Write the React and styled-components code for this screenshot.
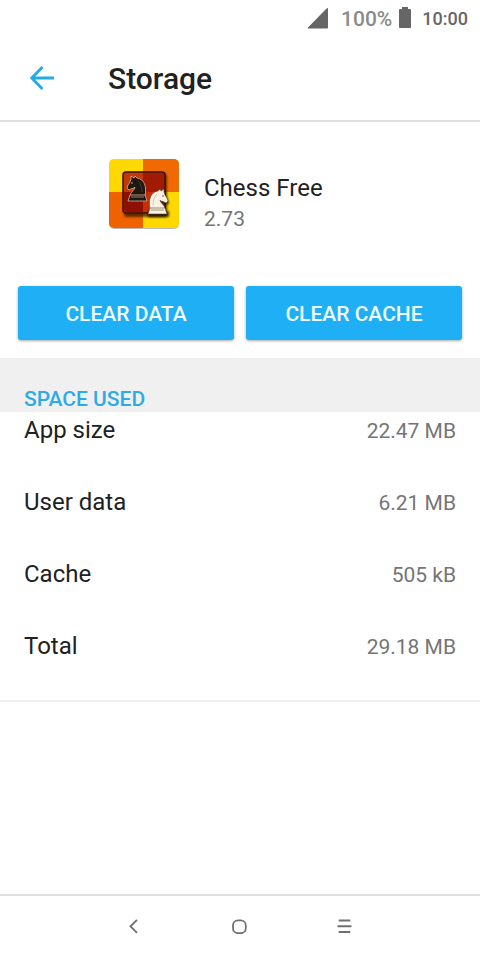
import React from 'react';
import styled, { createGlobalStyle } from 'styled-components';

const spaceUsed = [
  { label: 'App size', value: '22.47 MB' },
  { label: 'User data', value: '6.21 MB' },
  { label: 'Cache', value: '505 kB' },
  { label: 'Total', value: '29.18 MB' },
];

const KNIGHT =
  'M3 20 C3 16 8 14 8 11 C7 13 5 12 4 13 L2 14 L0 12 L1 9 L3 6 L4 3 L4 0 L7 2 L8 0 L10 2 C17 3 20 10 18 20 Z';

const ChessLogo = () => (
  <svg width="72" height="72" viewBox="0 0 72 72" role="img" aria-label="Chess Free">
    <defs>
      <clipPath id="tile">
        <rect x="1" y="1" width="70" height="69" rx="5" />
      </clipPath>
      <filter id="soft" x="-20%" y="-20%" width="150%" height="150%">
        <feGaussianBlur stdDeviation="1.2" />
      </filter>
    </defs>
    <rect x="1" y="2" width="70" height="69" rx="5" fill="#bbb" />
    <g clipPath="url(#tile)">
      <rect width="72" height="72" fill="#ffd800" />
      <rect x="35" width="37" height="34" fill="#f06a02" />
      <rect y="34" width="35" height="38" fill="#ee6200" />
    </g>
    <rect x="16" y="16" width="43" height="43" rx="3" fill="#3a1200" opacity="0.75" filter="url(#soft)" />
    <rect x="15" y="14" width="42" height="41" rx="3" fill="#c4380a" stroke="#351006" strokeWidth="1.5" />
    <path d="M35 15 H55 Q56 15 56 16 V34 H35 Z" fill="#a01a04" />
    <path d="M16 34 H35 V54 H18 Q16 54 16 52 Z" fill="#8e1004" />
    <path d="M35 34 H56 V54 H35 Z" fill="#c33007" />
    <g transform="translate(19 18)">
      <path d={KNIGHT} fill="#201713" stroke="#d9b48c" strokeWidth="0.8" />
      <path d="M3 19 H18 L20 25 H1 Z" fill="#201713" stroke="#d9b48c" strokeWidth="0.8" />
      <path d="M4 21 H17" fill="none" stroke="#b39a80" strokeWidth="0.8" />
      <path d="M11 5 C14 8 15 11 15 16" fill="none" stroke="#57473c" strokeWidth="0.7" />
      <circle cx="5" cy="7" r="0.7" fill="#e8d5bd" />
    </g>
    <g transform="translate(60 31) scale(-1 1)">
      <path d={KNIGHT} transform="translate(-1 2)" fill="#1b0a04" opacity="0.8" filter="url(#soft)" />
      <rect x="-1" y="22" width="21" height="6" fill="#1b0a04" opacity="0.8" filter="url(#soft)" />
      <path d={KNIGHT} fill="#f8f2e2" stroke="#5d4431" strokeWidth="0.6" />
      <path d="M3 19 H18 L20 25 H1 Z" fill="#f8f2e2" stroke="#5d4431" strokeWidth="0.6" />
      <path d="M4 21 H17" fill="none" stroke="#8a7560" strokeWidth="0.8" />
      <path d="M11 5 C14 8 15 11 15 16" fill="none" stroke="#c4b49c" strokeWidth="0.7" />
      <circle cx="5" cy="7" r="0.7" fill="#3c2a1e" />
    </g>
  </svg>
);

const App = () => (
  <Screen>
    <GlobalStyle />
    <StatusBar>
      <svg width="22" height="22" viewBox="0 0 22 22" aria-hidden="true">
        <path d="M1 20 L20 0.5 H20.5 V20 Z" fill="#666" stroke="#666" strokeLinejoin="round" />
      </svg>
      <Percent>100%</Percent>
      <svg width="12" height="24" viewBox="0 0 12 24" aria-hidden="true">
        <path d="M3 0 H9 V2 H11 Q12 2 12 3 V20 Q12 21 11 21 H1 Q0 21 0 20 V3 Q0 2 1 2 H3 Z" fill="#666" />
      </svg>
      <Clock>10:00</Clock>
    </StatusBar>

    <Header>
      <IconButton type="button" aria-label="Back">
        <svg width="26" height="26" viewBox="0 0 26 26" fill="none" stroke="#24a9ea" strokeWidth="2.8">
          <path d="M12.5 2 L1.8 13 L12.5 24 M2 13 H24" />
        </svg>
      </IconButton>
      <Title>Storage</Title>
    </Header>

    <Main>
      <AppInfo>
        <ChessLogo />
        <div>
          <AppName>Chess Free</AppName>
          <Version>2.73</Version>
        </div>
      </AppInfo>

      <Actions>
        <ActionButton type="button">CLEAR DATA</ActionButton>
        <ActionButton type="button">CLEAR CACHE</ActionButton>
      </Actions>

      <SectionTitle>SPACE USED</SectionTitle>
      <List>
        {spaceUsed.map(({ label, value }) => (
          <Row key={label}>
            <Label>{label}</Label>
            <Value>{value}</Value>
          </Row>
        ))}
      </List>
    </Main>

    <NavBar>
      <IconButton type="button" aria-label="Navigate back">
        <svg width="16" height="16" viewBox="0 0 16 16" fill="none" stroke="#707070" strokeWidth="1.9">
          <path d="M11 1.8 L4.5 8.3 L11 14.8" />
        </svg>
      </IconButton>
      <IconButton type="button" aria-label="Home">
        <svg width="16" height="16" viewBox="0 0 16 16" fill="none" stroke="#707070" strokeWidth="1.8">
          <rect x="2" y="2.4" width="12.8" height="12.8" rx="5" />
        </svg>
      </IconButton>
      <IconButton type="button" aria-label="Recent apps">
        <svg width="16" height="16" viewBox="0 0 16 16" fill="none" stroke="#707070" strokeWidth="1.9">
          <path d="M2.7 2.5 H14.2 M1.5 8.2 H15.5 M2.7 14 H14.2" />
        </svg>
      </IconButton>
    </NavBar>
  </Screen>
);

export default App;

const GlobalStyle = createGlobalStyle`
  * {
    box-sizing: border-box;
  }
  body {
    margin: 0;
    background-color: #fff;
    font-family: Roboto, 'Liberation Sans', sans-serif;
    color: #212121;
  }
`;

const Screen = styled.div`
  display: flex;
  flex-direction: column;
  min-height: 100vh;
`;

const StatusBar = styled.div`
  display: flex;
  align-items: center;
  justify-content: flex-end;
  height: 36px;
  padding: 2px 12px 0;
  font-weight: 500;
`;

const Percent = styled.span`
  margin: 0 7px 0 12px;
  font-size: 21px;
  line-height: 24px;
  color: #8a8a8a;
`;

const Clock = styled.span`
  margin-left: 11px;
  font-size: 18px;
  line-height: 24px;
  color: #666;
`;

const Header = styled.header`
  display: flex;
  align-items: center;
  gap: 52px;
  height: 86px;
  padding: 0 30px;
  border-bottom: 2px solid #e0e0e0;
`;

const IconButton = styled.button`
  display: flex;
  padding: 0;
  border: 0;
  background: none;
  cursor: pointer;
`;

const Title = styled.h1`
  margin: 0;
  padding-top: 2px;
  font-size: 30px;
  font-weight: 500;
  line-height: 36px;
`;

const Main = styled.main`
  flex: 1;
`;

const AppInfo = styled.section`
  display: flex;
  gap: 24px;
  padding: 36px 24px 54px 108px;

  svg {
    flex-shrink: 0;
  }
`;

const AppName = styled.h2`
  margin: 12px 0 0;
  font-size: 24px;
  font-weight: 400;
  line-height: 36px;
`;

const Version = styled.p`
  margin: 0;
  font-size: 21px;
  line-height: 26px;
  color: #757575;
`;

const Actions = styled.div`
  display: flex;
  gap: 12px;
  padding: 0 18px 18px;
`;

const ActionButton = styled.button`
  flex: 1;
  height: 54px;
  padding: 2px 0 0;
  border: 0;
  border-radius: 3px;
  background-color: #1eaff5;
  box-shadow: 0 1px 3px rgba(0, 0, 0, 0.35);
  font-family: inherit;
  font-size: 21px;
  font-weight: 500;
  color: #effbff;
  cursor: pointer;
`;

const SectionTitle = styled.h3`
  margin: 0;
  padding: 28px 24px 0;
  background-color: #f0f0f0;
  font-size: 21px;
  font-weight: 500;
  line-height: 26px;
  color: #2eabe6;
`;

const List = styled.dl`
  display: flex;
  flex-direction: column;
  gap: 36px;
  margin: 0;
  padding: 0 24px 36px;
  border-bottom: 2px solid #eee;
`;

const Row = styled.div`
  display: flex;
  align-items: center;
  justify-content: space-between;
  height: 36px;
`;

const Label = styled.dt`
  font-size: 24px;
`;

const Value = styled.dd`
  margin: 0;
  padding-top: 2px;
  font-size: 21px;
  color: #757575;
`;

const NavBar = styled.nav`
  display: flex;
  align-items: center;
  justify-content: center;
  gap: 89px;
  height: 66px;
  padding: 0 2px 4px 0;
  border-top: 2px solid #e0e0e0;
`;
